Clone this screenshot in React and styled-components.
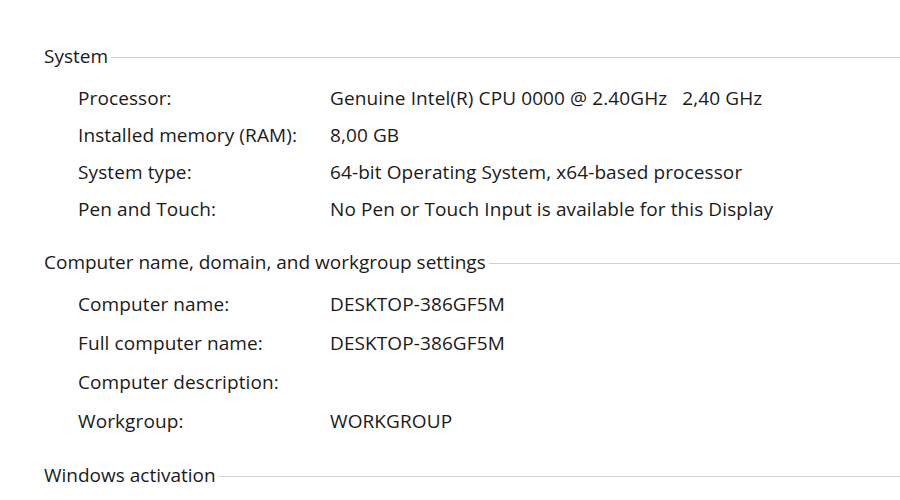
import React from "react";
import styled, { createGlobalStyle } from "styled-components";

const Global = createGlobalStyle`
  html, body { margin: 0; padding: 0; background: #ffffff; }
  body { font-family: "Open Sans", "Noto Sans", sans-serif; color: #1a1a1a; }
`;

const Page = styled.div`
  width: 900px;
  height: 500px;
  overflow: hidden;
  box-sizing: border-box;
  padding: 42px 0 0 44px;
  display: flex;
  flex-direction: column;
`;

const Section = styled.section`
  display: flex;
  flex-direction: column;
  margin-bottom: ${(p) => p.$gap || 0}px;
`;

const Header = styled.div`
  display: flex;
  align-items: center;
  height: 28px;
  font-size: 19px;
  white-space: nowrap;
  &::after {
    content: "";
    flex: 1;
    height: 1px;
    background: #d2d2d2;
    margin-left: 3px;
    margin-top: 3px;
  }
`;

const Rows = styled.div`
  display: grid;
  grid-template-columns: 252px 1fr;
  grid-auto-rows: ${(p) => p.$rowH}px;
  padding-left: 34px;
  margin-top: ${(p) => p.$top}px;
  font-size: 19px;
  letter-spacing: 0.1px;
  align-items: center;
`;

const Label = styled.div`
  white-space: nowrap;
`;

const Value = styled.div`
  white-space: pre;
`;

const system = [
  ["Processor:", "Genuine Intel(R) CPU 0000 @ 2.40GHz   2,40 GHz"],
  ["Installed memory (RAM):", "8,00 GB"],
  ["System type:", "64-bit Operating System, x64-based processor"],
  ["Pen and Touch:", "No Pen or Touch Input is available for this Display"],
];

const computer = [
  ["Computer name:", "DESKTOP-386GF5M"],
  ["Full computer name:", "DESKTOP-386GF5M"],
  ["Computer description:", ""],
  ["Workgroup:", "WORKGROUP"],
];

export default function App() {
  return (
    <>
      <Global />
      <Page>
        <Section $gap={21}>
          <Header>System</Header>
          <Rows $rowH={37} $top={9}>
            {system.map(([l, v]) => (
              <React.Fragment key={l}>
                <Label>{l}</Label>
                <Value>{v}</Value>
              </React.Fragment>
            ))}
          </Rows>
        </Section>
        <Section $gap={21}>
          <Header>Computer name, domain, and workgroup settings</Header>
          <Rows $rowH={39} $top={8}>
            {computer.map(([l, v]) => (
              <React.Fragment key={l}>
                <Label>{l}</Label>
                <Value>{v}</Value>
              </React.Fragment>
            ))}
          </Rows>
        </Section>
        <Section>
          <Header>Windows activation</Header>
        </Section>
      </Page>
    </>
  );
}
